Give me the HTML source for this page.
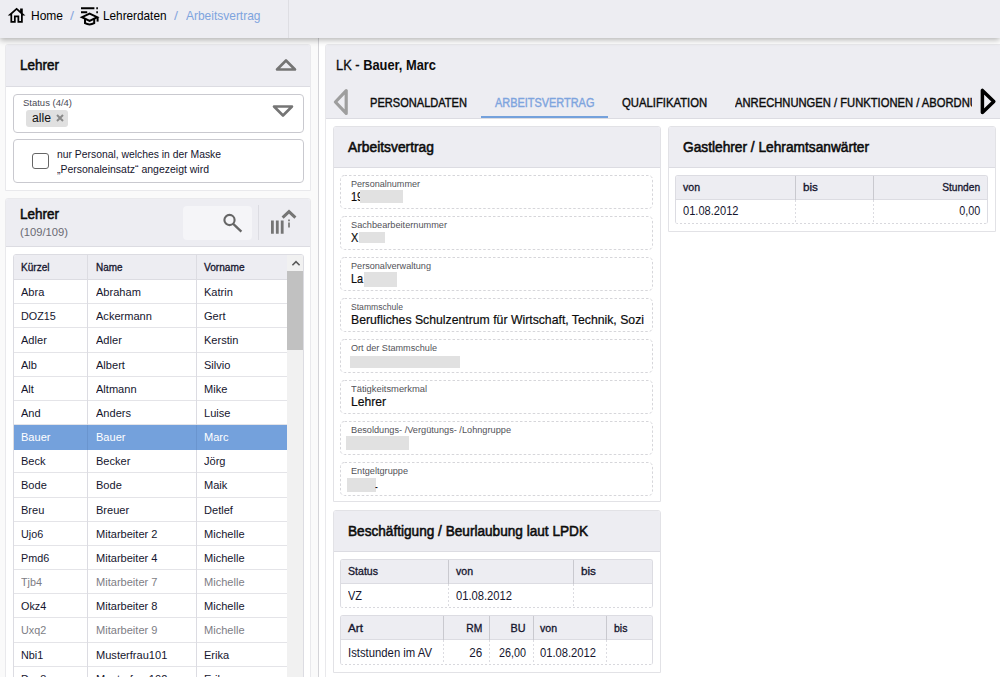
<!DOCTYPE html>
<html lang="de">
<head>
<meta charset="utf-8">
<title>Arbeitsvertrag</title>
<style>
*{box-sizing:border-box;margin:0;padding:0}
html,body{width:1000px;height:677px;overflow:hidden;background:#fafafa;font-family:"Liberation Sans",Arial,sans-serif;color:#15152e;font-size:12px}
.abs{position:absolute}
.t{position:absolute;white-space:nowrap;transform-origin:0 50%;line-height:16px;height:16px}
.r{transform-origin:100% 50%}
#topbar{position:absolute;left:0;top:0;width:1000px;height:38px;background:#ededf2;box-shadow:0 2px 6px rgba(0,0,0,.3);z-index:5}
#topbar .div{position:absolute;left:288px;top:0;width:1px;height:38px;background:#dedee3}
.panel{position:absolute;background:#fff;border:1px solid #e2e2e6;border-radius:3px 3px 0 0;overflow:hidden}
.phead{position:absolute;left:0;top:0;right:0;background:#ededf2;border-bottom:1px solid #dcdce2}
.box{position:absolute;border:1px solid #c9c9cf;border-radius:4px;background:#fff}
.fld{position:absolute;border:1px dashed #d6d6da;border-radius:4px;background:#fff}
.red{position:absolute;background:#e1e1e1}
.grid{position:absolute;border:1px solid #dcdce2;border-radius:3px;overflow:hidden;background:#fff}
.gd{border-bottom:0}
.gh{position:absolute;left:0;right:0;top:0;background:#ededf2;border-bottom:1px solid #dcdce2}
.vl{position:absolute;width:1px;background:#dcdce2}
.vd{position:absolute;width:1px;background:repeating-linear-gradient(to bottom,#dcdce1 0,#dcdce1 2px,transparent 2px,transparent 4px)}
.hd{position:absolute;height:1px;left:0;right:0;bottom:0;background:repeating-linear-gradient(to right,#d8d8dd 0,#d8d8dd 2px,#fff 2px,#fff 4px)}
.hl{position:absolute;height:1px;background:#e4e4e8;left:0;right:0}
</style>
</head>
<body>
<div id="topbar"><div class="div"></div>
<svg class="abs" style="left:5.9px;top:4.6px" width="21.2" height="21.2" viewBox="0 0 24 24"><path d="M19 9.3V4h-3v2.6L12 3 2 12h3v8h6v-6h2v6h6v-8h3l-3-2.7zM17 18h-2v-6H9v6H7v-7.81l5-4.5 5 4.5V18z" fill="#000" fill-rule="evenodd"/></svg>
<span id="t1" class="t" style="top:8.0px;font-size:13px;left:31.0px;color:#000;transform:scaleX(0.9225);">Home</span>
<span id="t2" class="t" style="top:8.0px;font-size:13px;left:70.0px;color:#8aa9de;transform:scaleX(1.1034);">/</span>
<svg class="abs" style="left:78.5px;top:4.7px" width="22" height="22" viewBox="0 0 22 22"><g fill="none" stroke="#000" stroke-width="2"><path d="M2 3.2 H15.4 M2 7.2 H8.2"/><path d="M17.3 3.2 h1.6 M17.3 7.2 h1.6" /><path d="M10.6 8.6 L3 12.2 L10.6 15.8 L18.2 12.2 Z"/><path d="M6 13.8 V18.2 Q10.6 20.8 15.2 18.2 V13.8"/><path d="M18.6 12.4 V16.6"/></g></svg>
<span id="t3" class="t" style="top:8.0px;font-size:13px;left:103.0px;color:#000;transform:scaleX(0.9055);">Lehrerdaten</span>
<span id="t4" class="t" style="top:8.0px;font-size:13px;left:174.0px;color:#8aa9de;transform:scaleX(1.1034);">/</span>
<span id="t5" class="t" style="top:8.0px;font-size:13px;left:186.0px;color:#7ea4de;transform:scaleX(0.9206);">Arbeitsvertrag</span>
</div>
<div class="panel" style="left:5px;top:44px;width:306px;height:147px;border-color:#e9e9ec"><div class="phead" style="height:42px"></div><span id="t6" class="t" style="top:12.0px;font-size:14px;left:14.0px;-webkit-text-stroke:0.55px;color:#0c0c0c;transform:scaleX(0.9637);">Lehrer</span><svg class="abs" style="left:268px;top:12px" width="24" height="16" viewBox="0 0 24 16"><path d="M3 12.5 L12 3.5 L21 12.5 Z" fill="none" stroke="#757575" stroke-width="2.6" stroke-linejoin="round"/></svg><div class="box" style="left:7px;top:49px;width:291px;height:39px"></div><span id="t7" class="t" style="top:49.5px;font-size:9.5px;left:17.0px;color:#4a4a55;transform:scaleX(0.9978);">Status (4/4)</span><div class="abs" style="left:20px;top:64.5px;width:42px;height:17px;background:#e0e0e0;border-radius:3px"></div><span id="t8" class="t" style="top:65.0px;font-size:12.5px;left:26.0px;color:#111;transform:scaleX(0.9759);">alle</span><svg class="abs" style="left:48.5px;top:68px" width="10" height="10" viewBox="0 0 10 10"><path d="M2 2 L8 8 M8 2 L2 8" stroke="#8a8a8a" stroke-width="2"/></svg><svg class="abs" style="left:265px;top:57.5px" width="24" height="16" viewBox="0 0 24 16"><path d="M3 3.5 L21 3.5 L12 12.5 Z" fill="none" stroke="#757575" stroke-width="2.6" stroke-linejoin="round"/></svg><div class="box" style="left:7px;top:94px;width:291px;height:44px"></div><div class="abs" style="left:26px;top:108px;width:17px;height:16px;border:1.6px solid #666;border-radius:3px;background:#fff"></div><span id="t9" class="t" style="top:101.0px;font-size:11px;left:51.0px;transform:scaleX(0.9412);">nur Personal, welches in der Maske</span><span id="t10" class="t" style="top:116.0px;font-size:11px;left:51.0px;transform:scaleX(0.9524);">„Personaleinsatz“ angezeigt wird</span></div>
<div class="panel" style="left:5px;top:198px;width:306px;height:500px;border-color:#e9e9ec"><div class="phead" style="height:48px"></div><span id="t11" class="t" style="top:7.0px;font-size:14px;left:14.0px;-webkit-text-stroke:0.55px;color:#0c0c0c;transform:scaleX(0.9637);">Lehrer</span><span id="t12" class="t" style="top:25.0px;font-size:11px;left:14.0px;color:#6a6a72;transform:scaleX(1.0192);">(109/109)</span><div class="abs" style="left:177px;top:6.5px;width:69px;height:34px;background:#f5f5f8;border-radius:4px"></div><svg class="abs" style="left:215px;top:12.6px" width="22" height="22" viewBox="0 0 22 22"><circle cx="8.5" cy="8" r="5.1" fill="none" stroke="#666" stroke-width="2.1"/><path d="M12.2 11.8 L20.4 19.6" stroke="#666" stroke-width="2.3" stroke-linecap="butt"/></svg><div class="abs" style="left:252px;top:6px;width:1px;height:35px;background:#dcdce2"></div><svg class="abs" style="left:263px;top:10px" width="28" height="26" viewBox="0 0 28 26"><g fill="none" stroke="#757575"><path d="M3.4 11.6 V24.8 M8.3 11.6 V24.8 M13.2 11.6 V24.8" stroke-width="2.8"/><path d="M13.6 8.6 L20 2.6 L26.4 8.6" stroke-width="3"/><path d="M20 10.4 V12.2 M20 13.4 V18.6" stroke-width="1.7"/></g></svg><div class="grid" style="left:7px;top:55px;width:291px;height:460px"><div class="gh" style="height:25px"></div><div class="hl" style="top:48.17px;width:274px"></div><div class="hl" style="top:72.34px;width:274px"></div><div class="hl" style="top:96.51px;width:274px"></div><div class="hl" style="top:120.68px;width:274px"></div><div class="hl" style="top:144.85px;width:274px"></div><div class="hl" style="top:169.02px;width:274px"></div><div class="hl" style="top:193.19px;width:274px"></div><div class="hl" style="top:217.36px;width:274px"></div><div class="hl" style="top:241.53px;width:274px"></div><div class="hl" style="top:265.70px;width:274px"></div><div class="hl" style="top:289.87px;width:274px"></div><div class="hl" style="top:314.04px;width:274px"></div><div class="hl" style="top:338.21px;width:274px"></div><div class="hl" style="top:362.38px;width:274px"></div><div class="hl" style="top:386.55px;width:274px"></div><div class="hl" style="top:410.72px;width:274px"></div><div class="hl" style="top:434.89px;width:274px"></div><div class="vl" style="left:73px;top:0;height:460px"></div><div class="vl" style="left:182px;top:0;height:460px"></div><div class="abs" style="left:0;top:170.02px;width:274px;height:24.57px;background:#74a1dc;overflow:hidden"><div class="vl" style="left:73px;top:0;height:30px;background:#6a95cf"></div><div class="vl" style="left:182px;top:0;height:30px;background:#6a95cf"></div></div><span id="t13" class="t" style="top:5.0px;font-size:10.3px;left:7.0px;-webkit-text-stroke:0.3px;transform:scaleX(0.9764);">Kürzel</span><span id="t14" class="t" style="top:5.0px;font-size:10.3px;left:81.5px;-webkit-text-stroke:0.3px;transform:scaleX(0.9647);">Name</span><span id="t15" class="t" style="top:5.0px;font-size:10.3px;left:190.0px;-webkit-text-stroke:0.3px;transform:scaleX(0.9850);">Vorname</span><span id="t16" class="t" style="top:29.0px;font-size:11px;left:7.0px;transform:scaleX(1.005);">Abra</span><span id="t17" class="t" style="top:29.0px;font-size:11px;left:81.5px;transform:scaleX(1.005);">Abraham</span><span id="t18" class="t" style="top:29.0px;font-size:11px;left:190.0px;transform:scaleX(1.005);">Katrin</span><span id="t19" class="t" style="top:53.2px;font-size:11px;left:7.0px;transform:scaleX(0.98);">DOZ15</span><span id="t20" class="t" style="top:53.2px;font-size:11px;left:81.5px;transform:scaleX(1.005);">Ackermann</span><span id="t21" class="t" style="top:53.2px;font-size:11px;left:190.0px;transform:scaleX(1.005);">Gert</span><span id="t22" class="t" style="top:77.3px;font-size:11px;left:7.0px;transform:scaleX(1.005);">Adler</span><span id="t23" class="t" style="top:77.3px;font-size:11px;left:81.5px;transform:scaleX(1.005);">Adler</span><span id="t24" class="t" style="top:77.3px;font-size:11px;left:190.0px;transform:scaleX(1.005);">Kerstin</span><span id="t25" class="t" style="top:101.5px;font-size:11px;left:7.0px;transform:scaleX(1.005);">Alb</span><span id="t26" class="t" style="top:101.5px;font-size:11px;left:81.5px;transform:scaleX(1.005);">Albert</span><span id="t27" class="t" style="top:101.5px;font-size:11px;left:190.0px;transform:scaleX(1.005);">Silvio</span><span id="t28" class="t" style="top:125.7px;font-size:11px;left:7.0px;transform:scaleX(1.005);">Alt</span><span id="t29" class="t" style="top:125.7px;font-size:11px;left:81.5px;transform:scaleX(1.005);">Altmann</span><span id="t30" class="t" style="top:125.7px;font-size:11px;left:190.0px;transform:scaleX(1.005);">Mike</span><span id="t31" class="t" style="top:149.9px;font-size:11px;left:7.0px;transform:scaleX(1.005);">And</span><span id="t32" class="t" style="top:149.9px;font-size:11px;left:81.5px;transform:scaleX(1.005);">Anders</span><span id="t33" class="t" style="top:149.9px;font-size:11px;left:190.0px;transform:scaleX(1.005);">Luise</span><span id="t34" class="t" style="top:174.0px;font-size:11px;left:7.0px;color:#fff;transform:scaleX(1.005);">Bauer</span><span id="t35" class="t" style="top:174.0px;font-size:11px;left:81.5px;color:#fff;transform:scaleX(1.005);">Bauer</span><span id="t36" class="t" style="top:174.0px;font-size:11px;left:190.0px;color:#fff;transform:scaleX(1.005);">Marc</span><span id="t37" class="t" style="top:198.2px;font-size:11px;left:7.0px;transform:scaleX(1.005);">Beck</span><span id="t38" class="t" style="top:198.2px;font-size:11px;left:81.5px;transform:scaleX(1.005);">Becker</span><span id="t39" class="t" style="top:198.2px;font-size:11px;left:190.0px;transform:scaleX(1.005);">Jörg</span><span id="t40" class="t" style="top:222.4px;font-size:11px;left:7.0px;transform:scaleX(1.005);">Bode</span><span id="t41" class="t" style="top:222.4px;font-size:11px;left:81.5px;transform:scaleX(1.005);">Bode</span><span id="t42" class="t" style="top:222.4px;font-size:11px;left:190.0px;transform:scaleX(1.005);">Maik</span><span id="t43" class="t" style="top:246.5px;font-size:11px;left:7.0px;transform:scaleX(1.005);">Breu</span><span id="t44" class="t" style="top:246.5px;font-size:11px;left:81.5px;transform:scaleX(1.005);">Breuer</span><span id="t45" class="t" style="top:246.5px;font-size:11px;left:190.0px;transform:scaleX(1.005);">Detlef</span><span id="t46" class="t" style="top:270.7px;font-size:11px;left:7.0px;transform:scaleX(0.98);">Ujo6</span><span id="t47" class="t" style="top:270.7px;font-size:11px;left:81.5px;transform:scaleX(1.005);">Mitarbeiter 2</span><span id="t48" class="t" style="top:270.7px;font-size:11px;left:190.0px;transform:scaleX(1.005);">Michelle</span><span id="t49" class="t" style="top:294.9px;font-size:11px;left:7.0px;transform:scaleX(0.98);">Pmd6</span><span id="t50" class="t" style="top:294.9px;font-size:11px;left:81.5px;transform:scaleX(1.005);">Mitarbeiter 4</span><span id="t51" class="t" style="top:294.9px;font-size:11px;left:190.0px;transform:scaleX(1.005);">Michelle</span><span id="t52" class="t" style="top:319.0px;font-size:11px;left:7.0px;color:#7d7d85;transform:scaleX(0.98);">Tjb4</span><span id="t53" class="t" style="top:319.0px;font-size:11px;left:81.5px;color:#7d7d85;transform:scaleX(1.005);">Mitarbeiter 7</span><span id="t54" class="t" style="top:319.0px;font-size:11px;left:190.0px;color:#7d7d85;transform:scaleX(1.005);">Michelle</span><span id="t55" class="t" style="top:343.2px;font-size:11px;left:7.0px;transform:scaleX(0.98);">Okz4</span><span id="t56" class="t" style="top:343.2px;font-size:11px;left:81.5px;transform:scaleX(1.005);">Mitarbeiter 8</span><span id="t57" class="t" style="top:343.2px;font-size:11px;left:190.0px;transform:scaleX(1.005);">Michelle</span><span id="t58" class="t" style="top:367.4px;font-size:11px;left:7.0px;color:#7d7d85;transform:scaleX(0.98);">Uxq2</span><span id="t59" class="t" style="top:367.4px;font-size:11px;left:81.5px;color:#7d7d85;transform:scaleX(1.005);">Mitarbeiter 9</span><span id="t60" class="t" style="top:367.4px;font-size:11px;left:190.0px;color:#7d7d85;transform:scaleX(1.005);">Michelle</span><span id="t61" class="t" style="top:391.5px;font-size:11px;left:7.0px;transform:scaleX(0.98);">Nbi1</span><span id="t62" class="t" style="top:391.5px;font-size:11px;left:81.5px;transform:scaleX(1.005);">Musterfrau101</span><span id="t63" class="t" style="top:391.5px;font-size:11px;left:190.0px;transform:scaleX(1.005);">Erika</span><span id="t64" class="t" style="top:415.7px;font-size:11px;left:7.0px;transform:scaleX(0.98);">Dsg8</span><span id="t65" class="t" style="top:415.7px;font-size:11px;left:81.5px;transform:scaleX(1.005);">Musterfrau102</span><span id="t66" class="t" style="top:415.7px;font-size:11px;left:190.0px;transform:scaleX(1.005);">Erika</span><div class="abs" style="left:273px;top:0;width:17px;height:460px;background:#f1f1f1"></div><div class="abs" style="left:273px;top:16px;width:17px;height:78.5px;background:#c1c1c1"></div><svg class="abs" style="left:275.5px;top:3.6px" width="12" height="8" viewBox="0 0 12 8"><path d="M2.4 6.2 L6 2.6 L9.6 6.2" fill="none" stroke="#5a5a5a" stroke-width="1.6"/></svg></div></div>
<div class="abs" style="left:319px;top:38px;width:681px;height:640px;background:#fff"></div><div class="abs" style="left:318px;top:38px;width:1px;height:640px;background:#d4d4d8"></div>
<div class="panel" style="left:325px;top:44px;width:690px;height:700px;border-color:#e9e9ec"><div class="phead" style="height:74px"></div><span id="t67" class="t" style="top:12.0px;font-size:14px;left:10.0px;font-weight:bold;color:#0c0c0c;transform:scaleX(0.9178);"><span style="font-weight:normal;-webkit-text-stroke:0.3px">LK - </span>Bauer, Marc</span><svg class="abs" style="left:6px;top:42px" width="18" height="30" viewBox="0 0 18 30"><path d="M14.2 3.6 V26.4 L3.4 15 Z" fill="none" stroke="#9e9e9e" stroke-width="3.2" stroke-linejoin="round"/></svg><span id="t68" class="t" style="top:49.5px;font-size:12.5px;left:44.0px;-webkit-text-stroke:0.4px;color:#0c0c0c;transform:scaleX(0.8857);">PERSONALDATEN</span><span id="t69" class="t" style="top:49.5px;font-size:12.5px;left:169.0px;-webkit-text-stroke:0.4px;color:#7ea4de;transform:scaleX(0.8743);">ARBEITSVERTRAG</span><span id="t70" class="t" style="top:49.5px;font-size:12.5px;left:296.0px;-webkit-text-stroke:0.4px;color:#0c0c0c;transform:scaleX(0.9041);">QUALIFIKATION</span><div class="abs" style="left:409px;top:47.5px;width:237px;height:20px;overflow:hidden"><span id="t71" class="t" style="top:2.0px;font-size:12.5px;left:0.0px;-webkit-text-stroke:0.4px;color:#0c0c0c;transform:scaleX(0.8965);">ANRECHNUNGEN / FUNKTIONEN / ABORDNUNGEN</span></div><div class="abs" style="left:155px;top:71px;width:127px;height:2px;background:#74a1dc"></div><svg class="abs" style="left:652px;top:42.3px" width="20" height="30" viewBox="0 0 20 30"><path d="M4.4 3.4 V25.6 L15.8 14.5 Z" fill="none" stroke="#000" stroke-width="3.5" stroke-linejoin="round"/></svg></div>
<div class="panel" style="left:333px;top:126px;width:328px;height:376px;"><div class="phead" style="height:41px"></div><span id="t72" class="t" style="top:11.5px;font-size:14px;left:14.0px;-webkit-text-stroke:0.55px;color:#0c0c0c;transform:scaleX(0.9867);">Arbeitsvertrag</span><svg class="abs" style="left:6px;top:48px" width="313" height="34"><rect x="0.5" y="0.5" width="312" height="33" rx="4" fill="#fff" stroke="#d6d6da" stroke-dasharray="2.5 2"/></svg><span id="t73" class="t" style="top:49.0px;font-size:9.2px;left:17.2px;color:#525258;transform:scaleX(0.9862);">Personalnummer</span><span id="t74" class="t" style="top:61.5px;font-size:13px;left:17.1px;color:#0c0c0c;transform:scaleX(0.84);-webkit-text-stroke:0.2px;">19</span><div class="red" style="left:26px;top:63px;width:43px;height:13px"></div><svg class="abs" style="left:6px;top:89px" width="313" height="34"><rect x="0.5" y="0.5" width="312" height="33" rx="4" fill="#fff" stroke="#d6d6da" stroke-dasharray="2.5 2"/></svg><span id="t75" class="t" style="top:90.0px;font-size:9.2px;left:17.2px;color:#525258;transform:scaleX(0.9998);">Sachbearbeiternummer</span><span id="t76" class="t" style="top:102.5px;font-size:13px;left:17.1px;color:#0c0c0c;transform:scaleX(0.84);-webkit-text-stroke:0.2px;">X</span><div class="red" style="left:25px;top:105px;width:26.2px;height:11px"></div><svg class="abs" style="left:6px;top:130px" width="313" height="34"><rect x="0.5" y="0.5" width="312" height="33" rx="4" fill="#fff" stroke="#d6d6da" stroke-dasharray="2.5 2"/></svg><span id="t77" class="t" style="top:131.0px;font-size:9.2px;left:17.2px;color:#525258;transform:scaleX(0.9913);">Personalverwaltung</span><span id="t78" class="t" style="top:143.5px;font-size:13px;left:17.1px;color:#0c0c0c;transform:scaleX(0.84);-webkit-text-stroke:0.2px;">La</span><div class="red" style="left:30px;top:144.5px;width:33px;height:15px"></div><svg class="abs" style="left:6px;top:171px" width="313" height="34"><rect x="0.5" y="0.5" width="312" height="33" rx="4" fill="#fff" stroke="#d6d6da" stroke-dasharray="2.5 2"/></svg><span id="t79" class="t" style="top:172.0px;font-size:9.2px;left:17.2px;color:#525258;transform:scaleX(0.9343);">Stammschule</span><span id="t80" class="t" style="top:184.5px;font-size:13px;left:17.1px;color:#0c0c0c;transform:scaleX(0.9416);-webkit-text-stroke:0.2px;">Berufliches Schulzentrum für Wirtschaft, Technik, Sozi</span><svg class="abs" style="left:6px;top:212px" width="313" height="34"><rect x="0.5" y="0.5" width="312" height="33" rx="4" fill="#fff" stroke="#d6d6da" stroke-dasharray="2.5 2"/></svg><span id="t81" class="t" style="top:213.0px;font-size:9.2px;left:17.2px;color:#525258;transform:scaleX(0.9908);">Ort der Stammschule</span><div class="red" style="left:16px;top:228.5px;width:109.5px;height:12.5px"></div><svg class="abs" style="left:6px;top:253px" width="313" height="34"><rect x="0.5" y="0.5" width="312" height="33" rx="4" fill="#fff" stroke="#d6d6da" stroke-dasharray="2.5 2"/></svg><span id="t82" class="t" style="top:254.0px;font-size:9.2px;left:17.2px;color:#525258;transform:scaleX(1.0195);">Tätigkeitsmerkmal</span><span id="t83" class="t" style="top:266.5px;font-size:13px;left:17.1px;color:#0c0c0c;transform:scaleX(0.9314);-webkit-text-stroke:0.2px;">Lehrer</span><svg class="abs" style="left:6px;top:294px" width="313" height="34"><rect x="0.5" y="0.5" width="312" height="33" rx="4" fill="#fff" stroke="#d6d6da" stroke-dasharray="2.5 2"/></svg><span id="t84" class="t" style="top:295.0px;font-size:9.2px;left:17.2px;color:#525258;transform:scaleX(1.0008);">Besoldungs- /Vergütungs- /Lohngruppe</span><div class="red" style="left:12px;top:308.5px;width:63px;height:14px"></div><svg class="abs" style="left:6px;top:335px" width="313" height="34"><rect x="0.5" y="0.5" width="312" height="33" rx="4" fill="#fff" stroke="#d6d6da" stroke-dasharray="2.5 2"/></svg><span id="t85" class="t" style="top:336.0px;font-size:9.2px;left:17.2px;color:#525258;transform:scaleX(0.9962);">Entgeltgruppe</span><div class="red" style="left:12.5px;top:350.5px;width:29px;height:14.5px"></div><span id="t86" class="t" style="top:352.3px;font-size:13px;left:41.4px;color:#0c0c0c;transform:scaleX(0.65);">-</span></div>
<div class="panel" style="left:668px;top:126px;width:328px;height:106px;"><div class="phead" style="height:41px"></div><span id="t87" class="t" style="top:11.5px;font-size:14px;left:14.0px;-webkit-text-stroke:0.55px;color:#0c0c0c;transform:scaleX(0.9797);">Gastlehrer / Lehramtsanwärter</span><div class="grid gd" style="left:6px;top:48px;width:313px;height:49px"><div class="gh" style="height:23.5px"></div><div class="vl" style="left:119px;top:0;height:23.5px;background:#c9c9cf"></div><div class="vd" style="left:119px;top:23.5px;height:24.5px"></div><div class="vl" style="left:197px;top:0;height:23.5px;background:#c9c9cf"></div><div class="vd" style="left:197px;top:23.5px;height:24.5px"></div><span id="t88" class="t" style="top:3.2px;font-size:10.5px;left:7.0px;-webkit-text-stroke:0.3px;transform:scaleX(1.0037);">von</span><span id="t89" class="t" style="top:3.2px;font-size:10.5px;left:127.0px;-webkit-text-stroke:0.3px;transform:scaleX(1.1163);">bis</span><span id="t90" class="t r" style="top:3.2px;font-size:10.5px;right:6.5px;-webkit-text-stroke:0.3px;transform:scaleX(0.9712);">Stunden</span><span id="t91" class="t" style="top:27.2px;font-size:12px;left:7.0px;transform:scaleX(0.9240);">01.08.2012</span><span id="t92" class="t r" style="top:27.2px;font-size:12px;right:6.5px;transform:scaleX(0.8990);">0,00</span><div class="hd"></div></div></div>
<div class="panel" style="left:333px;top:510px;width:328px;height:163px;"><div class="phead" style="height:41px"></div><span id="t93" class="t" style="top:12.0px;font-size:14px;left:14.0px;-webkit-text-stroke:0.55px;color:#0c0c0c;transform:scaleX(0.9727);">Beschäftigung / Beurlaubung laut LPDK</span><div class="grid gd" style="left:6px;top:48px;width:313px;height:49px"><div class="gh" style="height:23.5px"></div><div class="vl" style="left:107px;top:0;height:23.5px;background:#c9c9cf"></div><div class="vd" style="left:107px;top:23.5px;height:24.5px"></div><div class="vl" style="left:232px;top:0;height:23.5px;background:#c9c9cf"></div><div class="vd" style="left:232px;top:23.5px;height:24.5px"></div><span id="t94" class="t" style="top:3.2px;font-size:10.5px;left:7.0px;-webkit-text-stroke:0.3px;transform:scaleX(1.0073);">Status</span><span id="t95" class="t" style="top:3.2px;font-size:10.5px;left:115.0px;-webkit-text-stroke:0.3px;transform:scaleX(1.0037);">von</span><span id="t96" class="t" style="top:3.2px;font-size:10.5px;left:239.5px;-webkit-text-stroke:0.3px;transform:scaleX(1.1163);">bis</span><span id="t97" class="t" style="top:28.2px;font-size:12px;left:7.0px;transform:scaleX(0.9124);">VZ</span><span id="t98" class="t" style="top:28.2px;font-size:12px;left:115.0px;transform:scaleX(0.9324);">01.08.2012</span><div class="hd"></div></div><div class="grid gd" style="left:6px;top:104px;width:313px;height:49.5px"><div class="gh" style="height:24px"></div><div class="vl" style="left:102px;top:0;height:24px;background:#c9c9cf"></div><div class="vd" style="left:102px;top:24px;height:24.5px"></div><div class="vl" style="left:148px;top:0;height:24px;background:#c9c9cf"></div><div class="vd" style="left:148px;top:24px;height:24.5px"></div><div class="vl" style="left:192px;top:0;height:24px;background:#c9c9cf"></div><div class="vd" style="left:192px;top:24px;height:24.5px"></div><div class="vl" style="left:265px;top:0;height:24px;background:#c9c9cf"></div><div class="vd" style="left:265px;top:24px;height:24.5px"></div><span id="t99" class="t" style="top:3.5px;font-size:10.5px;left:7.0px;-webkit-text-stroke:0.3px;transform:scaleX(1.1176);">Art</span><span id="t100" class="t r" style="top:3.5px;font-size:10.5px;right:169.5px;-webkit-text-stroke:0.3px;transform:scaleX(0.9790);">RM</span><span id="t101" class="t r" style="top:3.5px;font-size:10.5px;right:126.0px;-webkit-text-stroke:0.3px;transform:scaleX(1.0278);">BU</span><span id="t102" class="t" style="top:3.5px;font-size:10.5px;left:199.0px;-webkit-text-stroke:0.3px;transform:scaleX(1.0037);">von</span><span id="t103" class="t" style="top:3.5px;font-size:10.5px;left:272.5px;-webkit-text-stroke:0.3px;transform:scaleX(1.0047);">bis</span><span id="t104" class="t" style="top:29.2px;font-size:12px;left:7.0px;transform:scaleX(0.9422);">Iststunden im AV</span><span id="t105" class="t r" style="top:29.2px;font-size:12px;right:169.5px;transform:scaleX(0.9731);">26</span><span id="t106" class="t r" style="top:29.2px;font-size:12px;right:126.0px;transform:scaleX(0.8991);">26,00</span><span id="t107" class="t" style="top:29.2px;font-size:12px;left:199.0px;transform:scaleX(0.9324);">01.08.2012</span><div class="hd"></div></div></div>
</body>
</html>
